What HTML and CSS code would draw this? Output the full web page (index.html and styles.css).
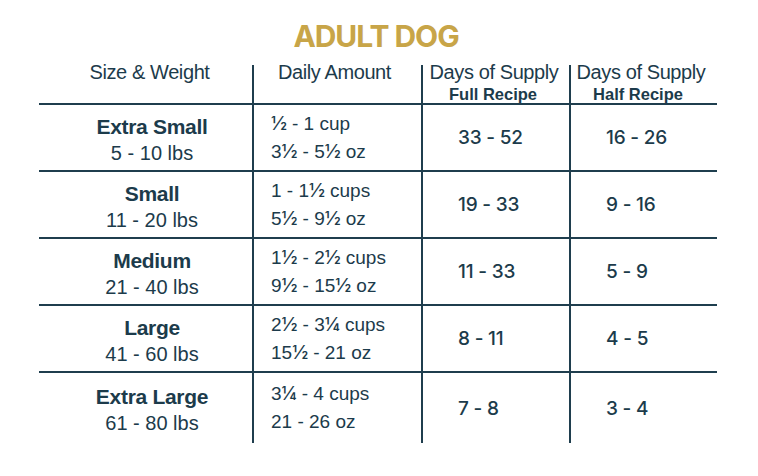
FILE: index.html
```html
<!DOCTYPE html>
<html lang="en">
<head>
<meta charset="utf-8">
<title>Adult Dog Feeding Chart</title>
<link rel="stylesheet" href="styles.css">
</head>
<body>
<div class="page">
  <h1 class="title">ADULT DOG</h1>
  <div class="table">
    <div class="row head">
      <div class="cell c1"><span class="h">Size &amp; Weight</span></div>
      <div class="cell c2"><span class="h">Daily Amount</span></div>
      <div class="cell c3"><span class="h">Days of Supply</span><span class="sub">Full Recipe</span></div>
      <div class="cell c4"><span class="h">Days of Supply</span><span class="sub">Half Recipe</span></div>
    </div>
    <div class="row body">
      <div class="cell c1"><span class="name">Extra Small</span><span class="wt">5 - 10 lbs</span></div>
      <div class="cell c2"><span><span class="fr">½</span> - 1 cup</span><span>3<span class="fr">½</span> - 5<span class="fr">½</span> oz</span></div>
      <div class="cell c3"><span class="num">33 - 52</span></div>
      <div class="cell c4"><span class="num">16 - 26</span></div>
    </div>
    <div class="row body">
      <div class="cell c1"><span class="name">Small</span><span class="wt">11 - 20 lbs</span></div>
      <div class="cell c2"><span>1 - 1<span class="fr">½</span> cups</span><span>5<span class="fr">½</span> - 9<span class="fr">½</span> oz</span></div>
      <div class="cell c3"><span class="num">19 - 33</span></div>
      <div class="cell c4"><span class="num">9 - 16</span></div>
    </div>
    <div class="row body">
      <div class="cell c1"><span class="name">Medium</span><span class="wt">21 - 40 lbs</span></div>
      <div class="cell c2"><span>1<span class="fr">½</span> - 2<span class="fr">½</span> cups</span><span>9<span class="fr">½</span> - 15<span class="fr">½</span> oz</span></div>
      <div class="cell c3"><span class="num">11 - 33</span></div>
      <div class="cell c4"><span class="num">5 - 9</span></div>
    </div>
    <div class="row body">
      <div class="cell c1"><span class="name">Large</span><span class="wt">41 - 60 lbs</span></div>
      <div class="cell c2"><span>2<span class="fr">½</span> - 3<span class="fr">¼</span> cups</span><span>15<span class="fr">½</span> - 21 oz</span></div>
      <div class="cell c3"><span class="num">8 - 11</span></div>
      <div class="cell c4"><span class="num">4 - 5</span></div>
    </div>
    <div class="row body last">
      <div class="cell c1"><span class="name">Extra Large</span><span class="wt">61 - 80 lbs</span></div>
      <div class="cell c2"><span>3<span class="fr">¼</span> - 4 cups</span><span>21 - 26 oz</span></div>
      <div class="cell c3"><span class="num">7 - 8</span></div>
      <div class="cell c4"><span class="num">3 - 4</span></div>
    </div>
  </div>
</div>
</body>
</html>
```

FILE: styles.css
```css
* { box-sizing: border-box; }
html, body { margin: 0; padding: 0; background: #ffffff; }
body {
  width: 758px;
  height: 476px;
  font-family: "Liberation Sans", Arial, sans-serif;
  color: #1c3b4b;
  overflow: hidden;
}
.page { padding-top: 18px; }
.title {
  margin: 0 0 11px 0;
  height: 36px;
  font-family: Inter, "Liberation Sans", sans-serif;
  font-size: 30px;
  line-height: 36px;
  font-weight: 700;
  letter-spacing: -0.035em;
  color: #c8a548;
  text-align: center;
  padding-right: 6px;
}
.table { margin-left: 39px; width: 678px; }
.row {
  display: grid;
  grid-template-columns: 213px 169px 148px 148px;
}
.cell { display: flex; flex-direction: column; }
.cell + .cell { border-left: 2px solid #1f3e4e; }

.head { height: 38px; }
.head .cell { align-items: center; }
.head .h {
  font-size: 20px;
  line-height: 14px;
  letter-spacing: -0.02em;
  white-space: nowrap;
}
.head .sub {
  margin-top: 6px;
  font-size: 16.5px;
  line-height: 18px;
  font-weight: 700;
  white-space: nowrap;
}
.head .c1 { padding-left: 8px; }
.head .c2 { padding-right: 6px; }
.head .c3 { padding-right: 4px; }
.head .c4 { padding-right: 6px; }
.head .c3 .sub { margin-right: 2px; }
.head .c4 .sub { margin-right: 6px; }

.body { height: 67px; }
.body.last { height: 72px; }
.body .cell {
  border-top: 2px solid #1f3e4e;
  justify-content: center;
  white-space: nowrap;
}
.body .c1 {
  align-items: center;
  padding-left: 13px;
  padding-top: 4px;
  font-size: 20px;
  line-height: 27px;
}
.body .c1 .name { font-size: 21px; font-weight: 700; letter-spacing: -0.3px; }
.body .c2 {
  padding-left: 17px;
  font-size: 19px;
  line-height: 28px;
}
.fr {
  font-family: Inter, "Liberation Sans", sans-serif;
  font-size: 19px;
  letter-spacing: -0.02em;
}
.body .c3, .body .c4 {
  padding-left: 35px;
  font-family: Inter, "Liberation Sans", sans-serif;
  font-size: 19px;
  line-height: 23px;
  font-weight: 500;
  letter-spacing: -0.01em;
}
```
